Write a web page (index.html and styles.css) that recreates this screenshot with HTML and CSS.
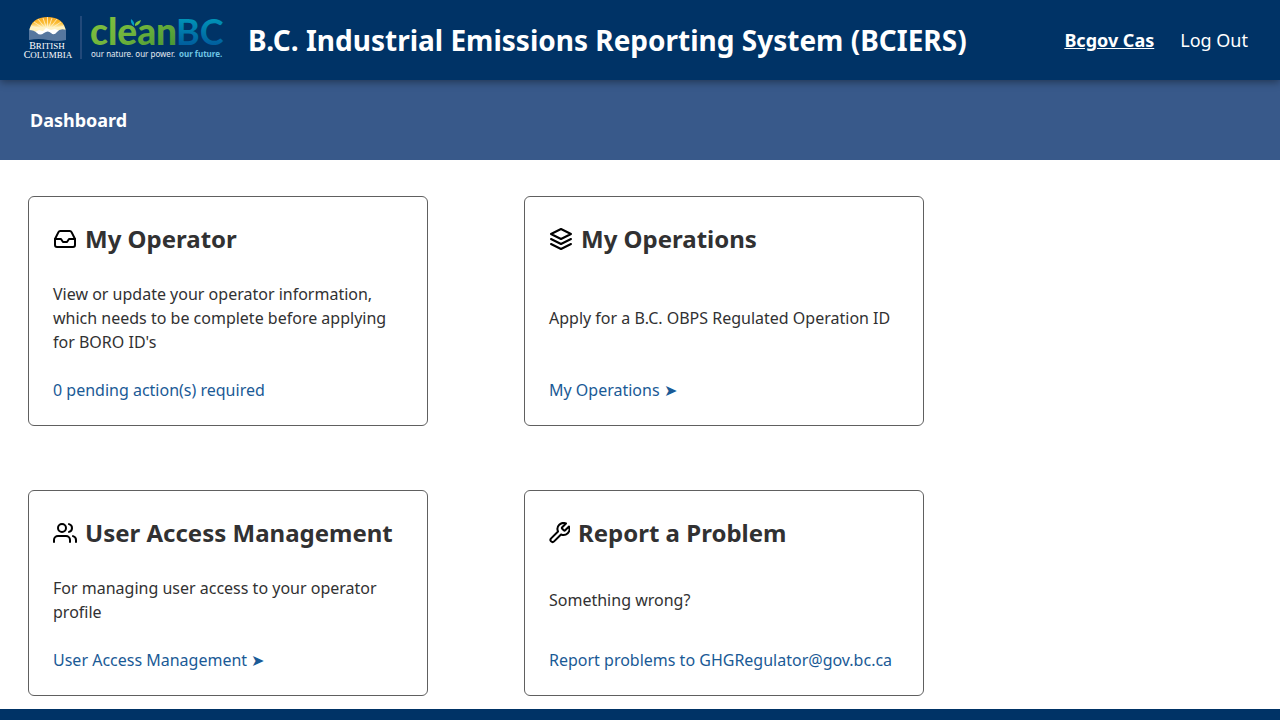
FILE: index.html
```html
<!DOCTYPE html>
<html lang="en">
<head>
<meta charset="utf-8">
<meta name="viewport" content="width=device-width, initial-scale=1">
<title>Dashboard</title>
<link rel="stylesheet" href="styles.css">
</head>
<body>
<header class="header">
  <a class="logo" href="#" aria-label="Home">
    <svg width="204" height="66" viewBox="0 -9 204 66">
      <defs>
        <linearGradient id="sun" x1="0" y1="0" x2="0" y2="1"><stop offset="0" stop-color="#f5a51d"/><stop offset="0.400" stop-color="#fbbd35"/><stop offset="0.700" stop-color="#fff3c0"/></linearGradient>
        <linearGradient id="green" x1="0" y1="0" x2="1" y2="1"><stop offset="0" stop-color="#86c440"/><stop offset="0.500" stop-color="#70b43c"/><stop offset="1" stop-color="#3f8f33"/></linearGradient>
        <linearGradient id="blue" x1="0" y1="0" x2="0" y2="1"><stop offset="0.200" stop-color="#0095b8"/><stop offset="0.800" stop-color="#005f9e"/></linearGradient>
      </defs>
      <path d="M5 16C6 6 13 1 23.500 1S41 6 42 16Z" fill="url(#sun)"/>
      <path d="M23.500 15L7 10M23.500 15L10 6M23.500 15L14 3M23.500 15L19 2M23.500 15V1M23.500 15L28 2M23.500 15L33 3M23.500 15L37 6M23.500 15L40 10" stroke="#fff2cf" stroke-width="0.800"/>
      <path d="M5 14l6 2 4-2 4 1 3-3 5 2 4-1 5 2 6-1v8H5Z" fill="#fff"/>
      <path d="M5 14q5 0 8 3t7 0 7 0 6-1 9-2v10q-9 2-18 0t-19 0Z" fill="#56779f"/>
      <g class="province"><text x="23" y="33" text-anchor="middle"><tspan class="initial">B</tspan>RITISH</text><text x="24" y="42" text-anchor="middle"><tspan class="initial">C</tspan>OLUMBIA</text></g>
      <path d="M57 0v43" stroke="#22497a" stroke-width="2"/>
      <text class="wordmark" x="66" y="29" fill="url(#green)">clean</text>
      <text class="wordmark capitals" x="152" y="29" fill="url(#blue)">BC</text>
      <path d="M110 10q-4-3-3-7 4 3 3 7Z" fill="#009fc5"/>
      <path d="M111 10q-1-4 6-6-1 5-6 6Z" fill="#7ac143"/>
      <text class="tagline" x="67" y="41">our nature. our power.</text>
      <text class="tagline future" x="155" y="41">our future.</text>
    </svg>
  </a>
  <h1 class="app-title">B.C. Industrial Emissions Reporting System (BCIERS)</h1>
  <nav class="account">
    <a class="profile" href="#">Bcgov Cas</a>
    <button class="logout" type="button">Log Out</button>
  </nav>
</header>
<nav class="breadcrumb" aria-label="Breadcrumb">Dashboard</nav>
<main class="tiles">
  <section class="tile">
    <h2 class="tile-title">
      <svg class="icon" width="24" height="24" viewBox="0 0 24 24"><path d="M22 12h-6l-2 3h-4l-2-3H2"/><path d="M5.450 5.110 2 12v6a2 2 0 0 0 2 2h16a2 2 0 0 0 2-2v-6l-3.450-6.890A2 2 0 0 0 16.760 4H7.240a2 2 0 0 0-1.790 1.110z"/></svg>
      My Operator</h2>
    <p class="tile-text">View or update your operator information, which needs to be complete before applying for BORO ID's</p>
    <a class="tile-link" href="#">0 pending action(s) required</a>
  </section>
  <section class="tile">
    <h2 class="tile-title">
      <svg class="icon" width="24" height="24" viewBox="0 0 24 24"><path d="M12 2 2 7l10 5 10-5-10-5z"/><path d="m2 17 10 5 10-5M2 12l10 5 10-5"/></svg>
      My Operations</h2>
    <p class="tile-text">Apply for a B.C. OBPS Regulated Operation ID</p>
    <a class="tile-link" href="#">My Operations ➤</a>
  </section>
  <section class="tile">
    <h2 class="tile-title">
      <svg class="icon" width="24" height="24" viewBox="0 0 24 24"><path d="M17 21v-2a4 4 0 0 0-4-4H5a4 4 0 0 0-4 4v2"/><circle cx="9" cy="7" r="4"/><path d="M23 21v-2a4 4 0 0 0-3-3.870M16 3.130a4 4 0 0 1 0 7.750"/></svg>
      User Access Management</h2>
    <p class="tile-text">For managing user access to your operator profile</p>
    <a class="tile-link" href="#">User Access Management ➤</a>
  </section>
  <section class="tile">
    <h2 class="tile-title">
      <svg class="icon" width="21" height="22" viewBox="1.500 1 21 22"><path d="M14.700 6.300a1 1 0 0 0 0 1.400l1.600 1.600a1 1 0 0 0 1.400 0l3.770-3.770a6 6 0 0 1-7.940 7.940l-6.910 6.910a2.120 2.120 0 0 1-3-3l6.910-6.910a6 6 0 0 1 7.940-7.940l-3.760 3.760z"/></svg>
      Report a Problem</h2>
    <p class="tile-text">Something wrong?</p>
    <a class="tile-link" href="#">Report problems to GHGRegulator@gov.bc.ca</a>
  </section>
</main>
<footer class="footer"></footer>
</body>
</html>
```
FILE: styles.css
```css
* {
  box-sizing: border-box;
}

body {
  margin: 0;
  min-height: 100vh;
  display: flex;
  flex-direction: column;
  font-family: "Noto Sans", sans-serif;
  font-size: 16px;
  line-height: 24px;
  color: #313132;
  background: #fff;
}

.header {
  position: relative;
  display: flex;
  align-items: center;
  min-height: 80px;
  padding: 0 32px 0 24px;
  gap: 20px;
  color: #fff;
  background: #003366;
  box-shadow: 0 2px 8px rgba(0, 0, 0, 0.4);
}

.logo svg {
  display: block;
  overflow: visible;
}

.province {
  font-family: "Liberation Serif", serif;
  font-size: 9px;
  fill: #fff;
}

.initial {
  font-size: 10px;
}

.wordmark {
  font-family: Lato, sans-serif;
  font-size: 37px;
  font-weight: 900;
}

.capitals {
  font-size: 36px;
  font-weight: 700;
}

.tagline {
  font-size: 8px;
  fill: #e4eaf1;
}

.future {
  font-weight: 700;
  fill: #6ec5e5;
}

.app-title {
  flex: 1;
  margin: 0;
  font-size: 28px;
  line-height: 40px;
  font-weight: 700;
}

.account {
  display: flex;
  align-items: center;
  gap: 26px;
  font-size: 18px;
}

.profile {
  color: inherit;
  font-weight: 700;
}

.logout {
  padding: 0;
  border: 0;
  font: inherit;
  color: inherit;
  background: none;
  cursor: pointer;
}

.breadcrumb {
  display: flex;
  align-items: center;
  min-height: 80px;
  padding: 0 30px;
  font-size: 18px;
  font-weight: 700;
  color: #fff;
  background: #38598a;
}

.tiles {
  display: grid;
  grid-template-columns: repeat(auto-fill, minmax(min(400px, 100%), 400px));
  gap: 64px 96px;
  padding: 36px 28px 13px;
}

.tile {
  display: flex;
  flex-direction: column;
  gap: 24px;
  padding: 24px 24px 23px;
  border: 1px solid #606060;
  border-radius: 6px;
}

.tile-title {
  display: flex;
  align-items: center;
  gap: 8px;
  margin: 0;
  padding-bottom: 1px;
  font-size: 24px;
  line-height: 36px;
  font-weight: 700;
}

.icon {
  flex: none;
  fill: none;
  stroke: #000;
  stroke-width: 2;
  stroke-linecap: round;
  stroke-linejoin: round;
}

.tile-text {
  display: flex;
  flex: 1;
  align-items: center;
  margin: 0;
}

.tile-link {
  color: #1a5a96;
  text-decoration: none;
}

.footer {
  flex: 1;
  background: #003366;
}
```
